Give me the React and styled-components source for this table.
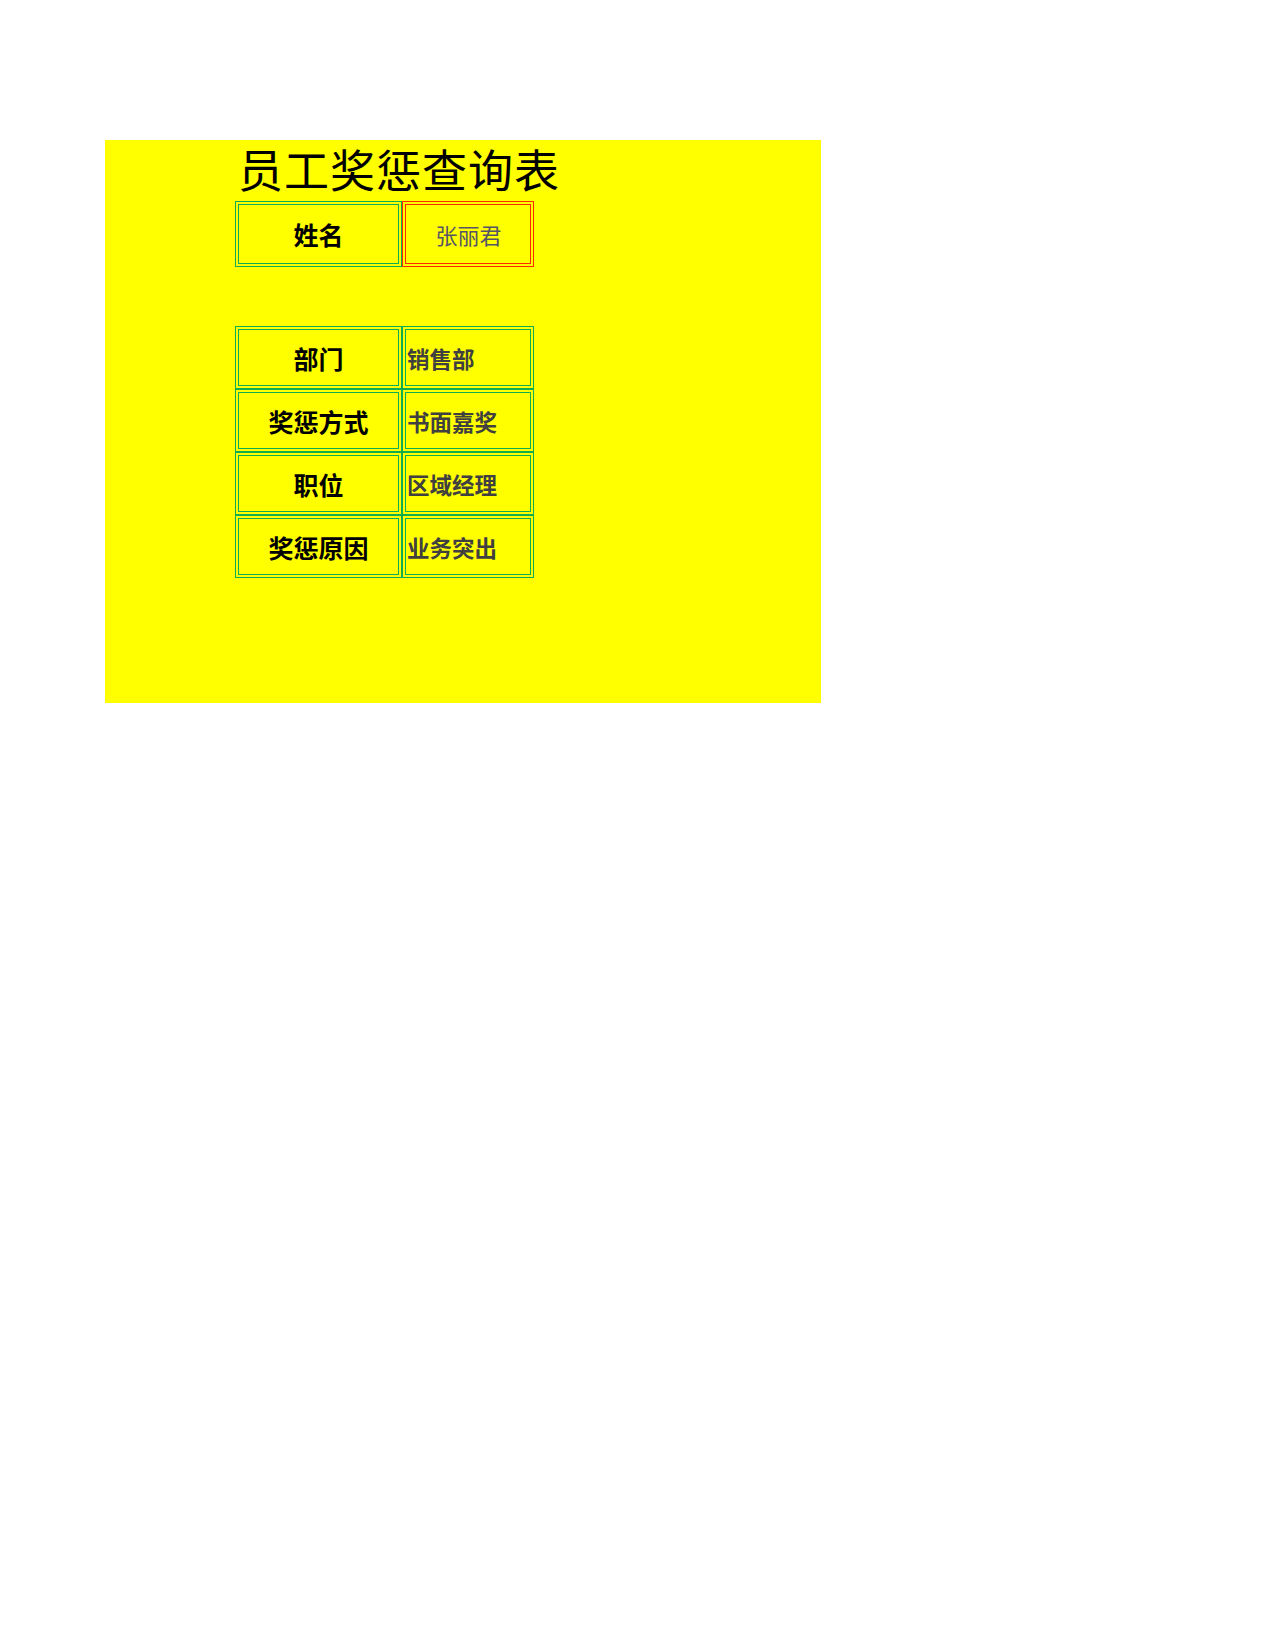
import styled, { createGlobalStyle } from "styled-components";

const GlobalStyle = createGlobalStyle`
  body {
    margin: 0;
    background: #ffffff;
    font-family: "Liberation Serif", "Noto Sans CJK SC", serif;
  }
`;

const Sheet = styled.div`
  box-sizing: border-box;
  margin: 140px 0 0 105px;
  width: 716px;
  height: 563px;
  background-color: #ffff00;
  padding-left: 130px;
  display: flex;
  flex-direction: column;
`;

const Title = styled.h1`
  margin: 0;
  height: 61px;
  line-height: 57px;
  padding-left: 3px;
  font-family: "Noto Sans CJK SC", sans-serif;
  font-size: 45px;
  font-weight: 400;
  color: #000000;
  letter-spacing: 1px;
  white-space: nowrap;
`;

const Table = styled.table`
  border-collapse: separate;
  border-spacing: 0;
  table-layout: fixed;
  width: 299px;
  margin-top: ${({ $top }) => $top || "0px"};
`;

const LabelCell = styled.td`
  box-sizing: border-box;
  width: 167px;
  height: ${({ $height }) => $height || "63px"};
  padding: 0;
  border: 4px double #12ad4f;
  text-align: center;
  vertical-align: middle;
  font-family: "Noto Sans CJK SC", sans-serif;
  font-size: 25px;
  font-weight: 700;
  color: #000000;
`;

const ValueCell = styled.td`
  box-sizing: border-box;
  width: 132px;
  height: ${({ $height }) => $height || "63px"};
  padding: 0 0 0 1px;
  border: 4px double ${({ $highlight }) => ($highlight ? "#ff2a00" : "#12ad4f")};
  text-align: ${({ $center }) => ($center ? "center" : "left")};
  vertical-align: middle;
  font-family: "Noto Sans CJK SC", sans-serif;
  font-size: ${({ $light }) => ($light ? "22px" : "22.5px")};
  font-weight: ${({ $light }) => ($light ? 400 : 700)};
  color: ${({ $light }) => ($light ? "#555566" : "#404040")};
`;

const details = [
  { label: "部门", value: "销售部" },
  { label: "奖惩方式", value: "书面嘉奖" },
  { label: "职位", value: "区域经理" },
  { label: "奖惩原因", value: "业务突出" },
];

export default function App() {
  return (
    <>
      <GlobalStyle />
      <Sheet>
        <Title>员工奖惩查询表</Title>

        <Table>
          <tbody>
            <tr>
              <LabelCell $height="66px">姓名</LabelCell>
              <ValueCell $height="66px" $highlight $center $light>
                张丽君
              </ValueCell>
            </tr>
          </tbody>
        </Table>

        <Table $top="59px">
          <tbody>
            {details.map((row) => (
              <tr key={row.label}>
                <LabelCell>{row.label}</LabelCell>
                <ValueCell>{row.value}</ValueCell>
              </tr>
            ))}
          </tbody>
        </Table>
      </Sheet>
    </>
  );
}
